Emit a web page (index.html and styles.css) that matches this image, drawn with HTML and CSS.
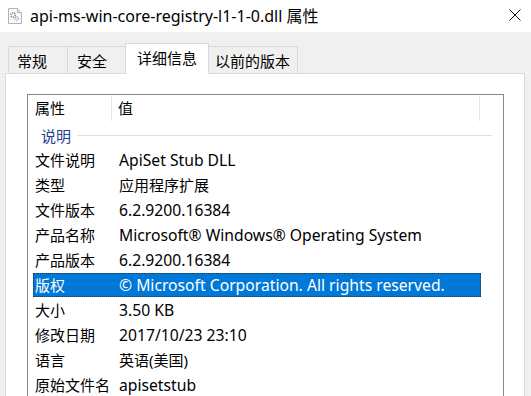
FILE: index.html
```html
<!DOCTYPE html>
<html lang="zh-CN">
<head>
    <meta charset="UTF-8">
    <title>api-ms-win-core-registry-l1-1-0.dll 属性</title>
    <link rel="stylesheet" href="styles.css">
</head>
<body>
    <div class="titlebar">
        <svg class="file-icon" width="14" height="16" viewBox="0 0 14 16">
            <path d="M0.5 0.5h9l4 4v11h-13z" fill="#fafafa" stroke="#b4b4b4"/>
            <path d="M9.5 0.5v4h4" fill="#e8e8e8" stroke="#b4b4b4"/>
            <circle cx="5" cy="7" r="2.2" fill="none" stroke="#8a8a8a" stroke-width="1.6" stroke-dasharray="1.2 0.9"/>
            <circle cx="8.6" cy="10.4" r="1.7" fill="none" stroke="#a0a0a0" stroke-width="1.4" stroke-dasharray="1 0.8"/>
        </svg>
        <div class="title">api-ms-win-core-registry-l1-1-0.dll 属性</div>
        <svg class="close" width="12" height="12" viewBox="0 0 12 12">
            <path d="M0.5 0.5l11 11M11.5 0.5l-11 11" stroke="#111" stroke-width="1"/>
        </svg>
    </div>
    <div class="dialog">
        <div class="tabs">
            <div class="tab tab-general">常规</div>
            <div class="tab tab-security">安全</div>
            <div class="tab tab-details active">详细信息</div>
            <div class="tab tab-previous">以前的版本</div>
        </div>
        <div class="panel">
            <div class="list">
                <div class="list-header">
                    <div class="col-name">属性</div>
                    <div class="col-value">值</div>
                </div>
                <div class="group"><span>说明</span></div>
                <div class="row"><div class="key">文件说明</div><div class="val en">ApiSet Stub DLL</div></div>
                <div class="row"><div class="key">类型</div><div class="val">应用程序扩展</div></div>
                <div class="row"><div class="key">文件版本</div><div class="val en">6.2.9200.16384</div></div>
                <div class="row"><div class="key">产品名称</div><div class="val en">Microsoft® Windows® Operating System</div></div>
                <div class="row"><div class="key">产品版本</div><div class="val en">6.2.9200.16384</div></div>
                <div class="row selected"><div class="key">版权</div><div class="val en">© Microsoft Corporation. All rights reserved.</div></div>
                <div class="row"><div class="key">大小</div><div class="val en">3.50 KB</div></div>
                <div class="row"><div class="key">修改日期</div><div class="val en">2017/10/23 23:10</div></div>
                <div class="row"><div class="key">语言</div><div class="val">英语(美国)</div></div>
                <div class="row"><div class="key">原始文件名</div><div class="val en">apisetstub</div></div>
            </div>
        </div>
    </div>
</body>
</html>
```

FILE: styles.css
```css
html, body {
    margin: 0;
    padding: 0;
    height: 100%;
    overflow: hidden;
}
body {
    font-family: "Noto Sans", "Noto Sans CJK SC", sans-serif;
    font-size: 15px;
    color: #000;
    background: #f0f0f0;
}
.en {
    font-size: 15.7px;
}
.titlebar {
    height: 32px;
    background: #fff;
    display: flex;
    align-items: center;
    padding-left: 8px;
    box-sizing: border-box;
}
.file-icon {
    margin-right: 8px;
    margin-top: -1px;
}
.title {
    flex: 1;
    font-size: 16px;
    margin-top: -2px;
}
.close {
    margin-right: 10px;
    margin-top: -2px;
}
.dialog {
    padding: 11px 6px 0 5px;
}
.tabs {
    display: flex;
    align-items: flex-end;
    padding-left: 3px;
    height: 30px;
    position: relative;
    z-index: 1;
}
.tab {
    height: 27px;
    box-sizing: border-box;
    border: 1px solid #d9d9d9;
    border-bottom: none;
    margin-right: -1px;
    padding-top: 2px;
    line-height: 25px;
    background: #f0f0f0;
}
.tab-general {
    width: 60px;
    padding-left: 8px;
}
.tab-security {
    width: 59px;
    padding-left: 9px;
}
.tab-details {
    width: 84px;
    padding-left: 11px;
}
.tab-previous {
    width: 90px;
    padding-left: 6px;
}
.tab.active {
    height: 31px;
    margin-bottom: -1px;
    background: #fff;
    padding-top: 1px;
    line-height: 27px;
    position: relative;
    z-index: 2;
}
.panel {
    background: #fff;
    border: 1px solid #d9d9d9;
    height: 400px;
    padding: 20px 20px 0 21px;
}
.list {
    border: 1px solid #828790;
    height: 380px;
}
.list-header {
    display: flex;
    height: 27px;
}
.col-name {
    width: 76px;
    padding-left: 7px;
    border-right: 1px solid #e5e5e5;
    margin: 1px 0;
    line-height: 25px;
}
.col-value {
    width: 361px;
    padding-left: 6px;
    border-right: 1px solid #e5e5e5;
    margin: 1px 0;
    line-height: 25px;
}
.group {
    display: flex;
    align-items: center;
    height: 26px;
    margin: 0 11px 0 13px;
    color: #1e3f8f;
}
.group::after {
    content: "";
    flex: 1;
    height: 1px;
    background: #dbe1e6;
    margin-left: 6px;
}
.row {
    display: flex;
    height: 24px;
    line-height: 23px;
    margin: 0 0 1px 5px;
    width: 448px;
    box-sizing: border-box;
    border: 1px dotted transparent;
}
.key {
    width: 84px;
    padding-left: 1px;
    white-space: nowrap;
}
.val {
    white-space: nowrap;
}
.row.selected {
    background: #0078d7;
    color: #fff;
    border-color: #333;
}
```
